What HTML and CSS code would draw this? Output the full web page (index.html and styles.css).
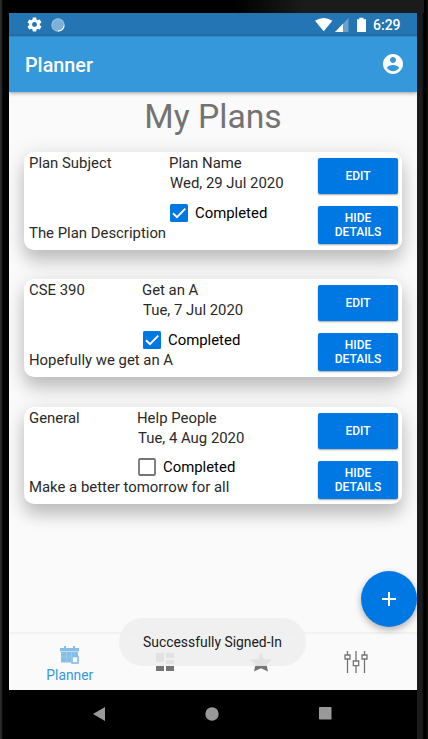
FILE: index.html
```html
<!DOCTYPE html>
<html lang="en">
<head>
<meta charset="utf-8">
<title>Planner</title>
<link rel="stylesheet" href="styles.css">
</head>
<body>
<div class="phone">
  <div class="screen">
    <div class="status">
      <svg class="gear" viewBox="0 0 24 24" width="17" height="17"><path fill="#fff" fill-rule="evenodd" d="M19.43 12.98c.04-.32.07-.64.07-.98s-.03-.66-.07-.98l2.11-1.65c.19-.15.24-.42.12-.64l-2-3.46c-.12-.22-.39-.3-.61-.22l-2.49 1c-.52-.4-1.08-.73-1.69-.98l-.38-2.65A.49.49 0 0 0 14 2h-4c-.25 0-.46.18-.49.42l-.38 2.65c-.61.25-1.17.59-1.69.98l-2.49-1c-.23-.09-.49 0-.61.22l-2 3.46c-.13.22-.07.49.12.64l2.11 1.65c-.04.32-.07.65-.07.98s.03.66.07.98l-2.11 1.65c-.19.15-.24.42-.12.64l2 3.46c.12.22.39.3.61.22l2.49-1c.52.4 1.08.73 1.69.98l.38 2.65c.03.24.24.42.49.42h4c.25 0 .46-.18.49-.42l.38-2.65c.61-.25 1.17-.59 1.69-.98l2.49 1c.23.09.49 0 .61-.22l2-3.46c.12-.22.07-.49-.12-.64zM12 15.5a3.5 3.5 0 1 1 0-7 3.5 3.5 0 0 1 0 7z"/></svg>
      <svg class="sync" viewBox="0 0 14 14" width="14" height="14"><circle cx="7" cy="7" r="6.7" fill="#7fb0d7"/><circle cx="7" cy="7" r="6" fill="none" stroke="#b4d2e9" stroke-dasharray="1 1"/><path d="M13 8A6 6 0 0 1 7 12.9" fill="none" stroke="#fff" stroke-width="1.2"/></svg>
      <svg class="signals" viewBox="0 0 54 16" width="54" height="16"><path fill="#fff" d="M0 3.8Q8.700-2 17.400 3.800L8.700 14.300Z"/><path fill="#6aa1cb" d="M20 15L33.500 1V15Z"/><path fill="#fff" d="M20 15L28 6.800V15Z"/><path fill="#fff" d="M42 2.200h2.300V.8h4.200v1.400H51V15h-9z"/></svg>
      <span class="time">6:29</span>
    </div>
    <header class="appbar">
      <h1 class="title">Planner</h1>
      <svg viewBox="0 0 24 24" width="24" height="24"><path fill="#fff" d="M12 2C6.480 2 2 6.480 2 12s4.480 10 10 10 10-4.480 10-10S17.520 2 12 2zm0 3c1.660 0 3 1.340 3 3s-1.340 3-3 3-3-1.340-3-3 1.340-3 3-3zm0 14.200c-2.500 0-4.710-1.280-6-3.220.03-1.990 4-3.080 6-3.080 1.990 0 5.970 1.090 6 3.080-1.290 1.940-3.500 3.220-6 3.220z"/></svg>
    </header>
    <main class="content">
      <h2 class="heading">My Plans</h2>
      <section class="card card-first">
        <div class="info">
          <div class="row"><span class="subject">Plan Subject</span>
            <div class="details"><div class="name">Plan Name</div><div class="date">Wed, 29 Jul 2020</div>
              <div class="check"><svg viewBox="0 0 18 18" width="18" height="18"><rect width="18" height="18" rx="1.500" fill="#0078e4"/><path d="M3 9.300L7 13.200L15.300 4.700" fill="none" stroke="#fff" stroke-width="1.900"/></svg><span>Completed</span></div></div></div>
          <div class="description">The Plan Description</div>
        </div>
        <div class="actions"><button class="button">EDIT</button><button class="button button-hide">HIDE<br>DETAILS</button></div>
      </section>
      <section class="card card-second">
        <div class="info">
          <div class="row"><span class="subject">CSE 390</span>
            <div class="details"><div class="name">Get an A</div><div class="date">Tue, 7 Jul 2020</div>
              <div class="check"><svg viewBox="0 0 18 18" width="18" height="18"><rect width="18" height="18" rx="1.500" fill="#0078e4"/><path d="M3 9.300L7 13.200L15.300 4.700" fill="none" stroke="#fff" stroke-width="1.900"/></svg><span>Completed</span></div></div></div>
          <div class="description">Hopefully we get an A</div>
        </div>
        <div class="actions"><button class="button">EDIT</button><button class="button button-hide">HIDE<br>DETAILS</button></div>
      </section>
      <section class="card card-third">
        <div class="info">
          <div class="row"><span class="subject">General</span>
            <div class="details"><div class="name">Help People</div><div class="date">Tue, 4 Aug 2020</div>
              <div class="check"><svg viewBox="0 0 18 18" width="18" height="18"><rect x="1" y="1" width="16" height="16" rx="1" fill="none" stroke="#757575" stroke-width="1.800"/></svg><span>Completed</span></div></div></div>
          <div class="description">Make a better tomorrow for all</div>
        </div>
        <div class="actions"><button class="button">EDIT</button><button class="button button-hide">HIDE<br>DETAILS</button></div>
      </section>
    </main>
    <nav class="tabs">
      <div class="tab tab-active">
        <svg viewBox="0 0 20 19" width="20" height="19"><path fill="#85bfe9" d="M0 2h4V0h2v2h7V0h2v2h4v3.500H0zM1 6h17v4h-7v6.500H1z"/><path d="M6.500 6v10.500M11.500 6v4M1 11h10" stroke="#a5d0ef" stroke-width=".7"/><rect x="12" y="10.500" width="6" height="6.500" fill="#fafafa" stroke="#85bfe9" stroke-width="1.700"/></svg>
        <span>Planner</span>
      </div>
      <div class="tab"><svg viewBox="0 0 18 18" width="18" height="18"><path fill="#757575" d="M0 0h8v9H0zM10 0h8v5h-8zM10 7h8v4h-8zM0 13h8v5H0zM10 13h8v5h-8z"/></svg></div>
      <div class="tab"><svg class="star" viewBox="0 0 22 20" width="22" height="20"><path fill="#757575" d="M11 0l2.800 7.200L22 7.600l-5.500 5L18 19.500 11 16.200 4 19.500l1.500-6.900L0 7.600l8.200-.4z"/></svg></div>
      <div class="tab"><svg class="sliders" viewBox="0 0 24 22" width="24" height="22"><path fill="none" stroke="#757575" stroke-width="1.300" d="M3.500 0v4M3.500 8.500V22M1 4h5v4H1zM12 0v10M12 15v7M9.300 10h5.400v4.700H9.300zM20.500 0v4M20.500 8.500V22M18 4h5v4h-5z"/></svg></div>
    </nav>
    <div class="fab"><svg viewBox="0 0 14 14" width="14" height="14"><path d="M7 0v14M0 7h14" stroke="#fff" stroke-width="2"/></svg></div>
    <div class="toast">Successfully Signed-In</div>
  </div>
  <div class="system">
    <svg viewBox="0 0 12 14" width="12" height="14"><path fill="#999" d="M0 7L12 0v14z"/></svg>
    <svg viewBox="0 0 14 14" width="14" height="14"><circle cx="7" cy="7" r="6.700" fill="#999"/></svg>
    <svg viewBox="0 0 13 13" width="13" height="13"><rect width="12.500" height="12.500" rx=".7" fill="#999"/></svg>
  </div>
</div>
</body>
</html>
```
FILE: styles.css
```css
* { box-sizing: border-box; }
body { margin: 0; background: #000; font-family: Roboto, sans-serif; }
svg { display: block; flex: none; }
.phone {
  width: 428px; height: 739px; padding: 13px 11px 0 9px; overflow: hidden;
  background: linear-gradient(90deg, #303232 0, #222 1.5px, #000 3px, #000 417px, #1b1b1b 417px, #1b1b1b 422px, #000 424px, #000 426px, #171711 428px);
}
.phone::before {
  content: ""; position: absolute; top: 0; left: 214px; width: 210px; height: 13px;
  background: linear-gradient(90deg, #000 20px, #1b1b1b 90px);
}
.screen {
  position: relative; width: 408px; height: 677px; background: #fafafa;
  display: flex; flex-direction: column; overflow: hidden;
}
.status { height: 23px; background: #2375b3; display: flex; align-items: center; padding: 0 16px 0 17px; color: #fff; }
.sync { margin-left: 8px; }
.signals { margin-left: auto; margin-right: -1px; }
.time { width: 28px; margin-left: 5px; font-size: 14px; font-weight: 500; line-height: 24px; padding-top: 1px; white-space: nowrap; }
.appbar {
  height: 56px; padding: 0 12px 0 16px; background: #3498db; border-top: 1px solid #2b88c9;
  display: flex; justify-content: space-between; align-items: center; z-index: 1;
  box-shadow: 0 1px 4px rgba(0, 0, 0, .4);
}
.appbar svg { margin-top: -2px; }
.title { margin: 2px 0 0; color: #fff; font-size: 19.8px; font-weight: 500; }
.content { flex: 1; padding: 0 15px; }
.heading { margin: 0; height: 60px; padding: 3px 0 0; line-height: 43px; font-size: 33.7px; font-weight: 400; text-align: center; color: #737373; }
.card {
  height: 97.5px; margin-bottom: 29.8px; padding: 1px 4px 0 5px; display: flex; justify-content: space-between;
  background: #fff; border-radius: 10px; color: #292929; font-size: 14.9px; line-height: 20px; white-space: nowrap;
  box-shadow: 0 12px 16px rgba(0, 0, 0, .17), 0 3px 22px rgba(0, 0, 0, .13);
}
.row { display: flex; height: 69.6px; }
.subject { width: 140px; }
.card-second .subject { width: 113px; }
.card-third .subject { width: 108px; }
.date { padding-left: 1px; }
.check { display: flex; align-items: center; gap: 7px; height: 20px; margin-top: 9.6px; padding-left: 1px; color: #000; }
.actions { padding-top: 5px; display: flex; flex-direction: column; gap: 12px; }
.button {
  width: 80px; height: 36px; padding: 0; border: 0; border-radius: 2px; background: #0078e4; color: #fff;
  font: 500 12px/14px Roboto, sans-serif; box-shadow: 0 1px 2px rgba(0, 0, 0, .35);
}
.button-hide { height: 38px; }
.tabs { height: 58px; border-top: 2px solid #f2f2f2; padding: 0 13px; display: grid; grid-template-columns: repeat(4, 1fr); }
.tab { display: flex; flex-direction: column; align-items: center; padding-top: 19px; }
.tab-active { padding-top: 12px; color: #3498db; font-size: 13.8px; line-height: 20px; }
.star { margin-top: -1px; }
.sliders { margin-top: -2px; }
.fab {
  position: absolute; left: 352px; top: 558px; width: 56px; height: 56px; border-radius: 50%; background: #0078e4;
  display: flex; align-items: center; justify-content: center; box-shadow: 0 3px 7px rgba(0, 0, 0, .3);
}
.toast {
  position: absolute; left: 110px; top: 605px; width: 187px; height: 48px; border-radius: 24px;
  background: rgba(238, 238, 238, .9); color: #1b1b1b; font-size: 13.9px; line-height: 49px; text-align: center; white-space: nowrap;
}
.system { height: 47px; display: flex; align-items: center; justify-content: space-between; padding: 0 85px 0 84px; }
```
